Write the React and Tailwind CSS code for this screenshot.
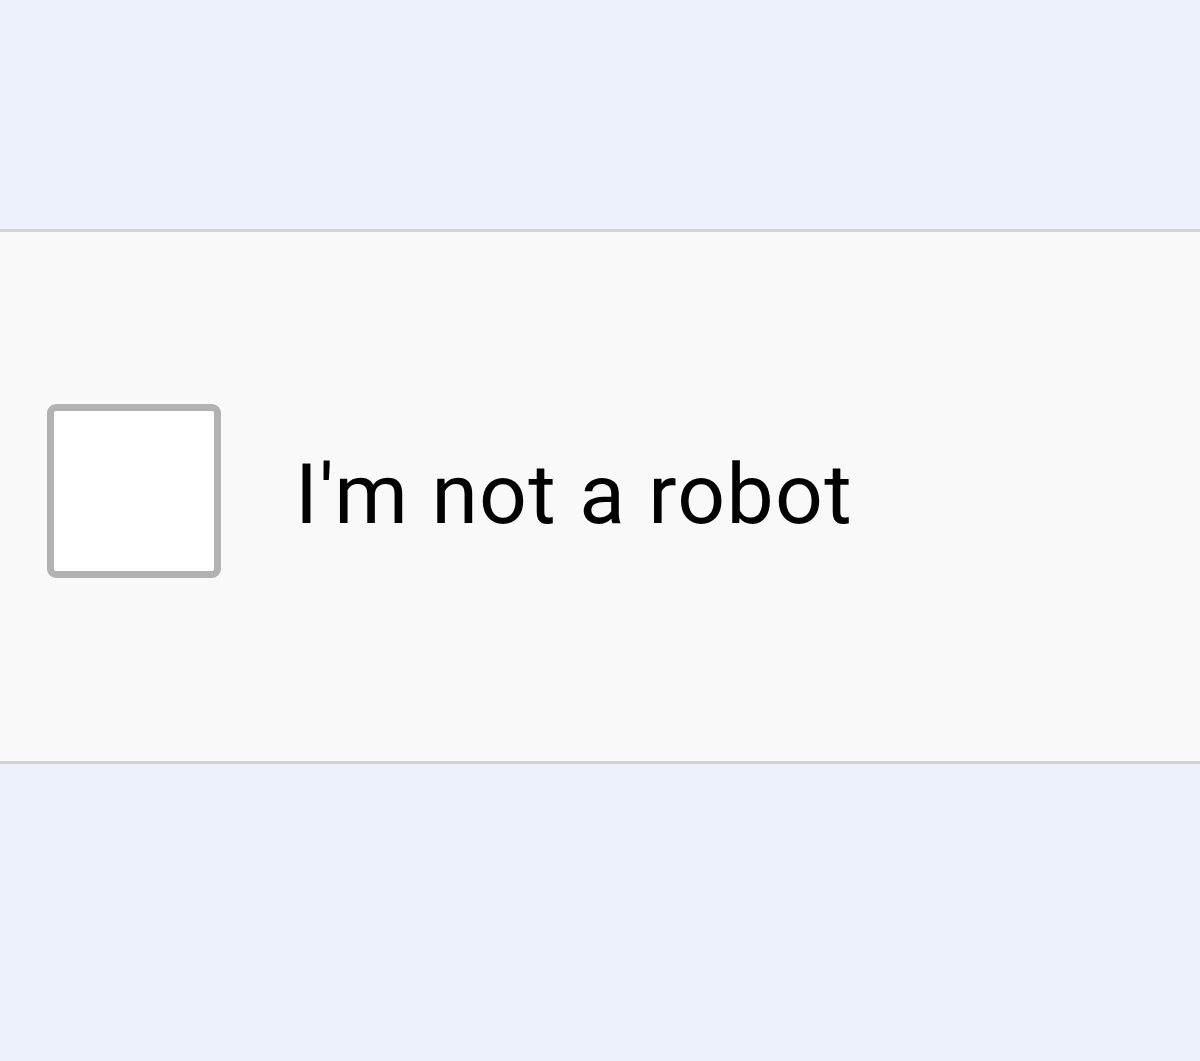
export default function App() {
  return (
    <div className="h-[1061px] w-full overflow-hidden bg-[#edf1fb] pt-[229px]">
      {/* reCAPTCHA-style band */}
      <div className="flex h-[535px] items-center border-y-[3px] border-[#d3d3d3] bg-[#f9f9f9] pb-[12px]">
        <div className="ml-[47px] h-[174px] w-[174px] shrink-0 rounded-[9px] border-[7px] border-[#b2b2b2] bg-white" />
        <span
          className="ml-[74px] mt-[8px] text-[84px] leading-none tracking-[1.3px] text-black"
          style={{ fontFamily: 'Roboto, "Liberation Sans", sans-serif' }}
        >
          I'm not a robot
        </span>
      </div>
    </div>
  );
}
